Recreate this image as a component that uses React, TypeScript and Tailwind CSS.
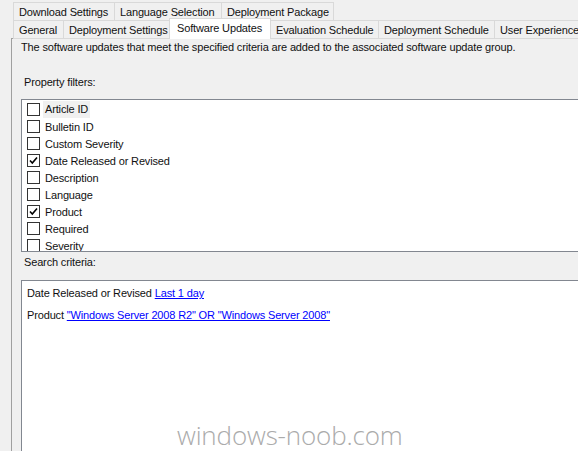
import React from "react";

const topTabs = [
  { label: "Download Settings", w: 101 },
  { label: "Language Selection", w: 107 },
  { label: "Deployment Package", w: 112 },
];

const bottomTabs = [
  { label: "General", w: 50 },
  { label: "Deployment Settings", w: 107 },
  { label: "Software Updates", w: 100, active: true },
  { label: "Evaluation Schedule", w: 108 },
  { label: "Deployment Schedule", w: 116 },
  { label: "User Experience", w: 100 },
];

const filters = [
  { label: "Article ID", checked: false, focus: true },
  { label: "Bulletin ID", checked: false },
  { label: "Custom Severity", checked: false },
  { label: "Date Released or Revised", checked: true },
  { label: "Description", checked: false },
  { label: "Language", checked: false },
  { label: "Product", checked: true },
  { label: "Required", checked: false },
  { label: "Severity", checked: false },
];

function Tab({ label, w, active }: { label: string; w: number; active?: boolean }) {
  if (active) {
    return (
      <div
        className="relative z-10 -mx-px -mt-[2px] h-[21px] shrink-0 overflow-hidden whitespace-nowrap border border-b-0 border-[#d9d9d9] bg-white pl-[7px] pt-[2px]"
        style={{ width: w + 2 }}
      >
        {label}
      </div>
    );
  }
  return (
    <div
      className="-mr-px h-[19px] shrink-0 overflow-hidden whitespace-nowrap border border-[#d9d9d9] bg-[#f0f0f0] pl-[5px] pt-[2px]"
      style={{ width: w + 1 }}
    >
      {label}
    </div>
  );
}

function CheckBox({ checked }: { checked: boolean }) {
  return (
    <div className="flex h-[13px] w-[13px] shrink-0 items-center justify-center border border-[#333333] bg-white">
      {checked && (
        <svg width="9" height="9" viewBox="0 0 9 9">
          <path d="M1 4.5 L3.3 7 L8 1.5" fill="none" stroke="#000" strokeWidth="1.6" />
        </svg>
      )}
    </div>
  );
}

export default function App() {
  return (
    <div
      className="relative h-[451px] w-[578px] overflow-hidden bg-[#f0f0f0] text-[11px] leading-[14px] tracking-[-0.15px] text-[#111111]"
      style={{ fontFamily: '"Liberation Sans", Arial, sans-serif' }}
    >
      {/* Tab strip */}
      <div className="pl-[13px] pt-[2px]">
        <div className="flex h-[18px]">
          {topTabs.map((t) => (
            <Tab key={t.label} label={t.label} w={t.w} />
          ))}
        </div>
        <div className="flex h-[18px]">
          {bottomTabs.map((t) => (
            <Tab key={t.label} label={t.label} w={t.w} active={t.active} />
          ))}
        </div>
      </div>

      {/* Page */}
      <div className="ml-[11px] h-[420px] border-l border-t border-[#a0a0a0] bg-[#f0f0f0] pl-[9px]">
        <p className="whitespace-nowrap pt-[1px]">
          The software updates that meet the specified criteria are added to the associated software update group.
        </p>

        <p className="mt-[21px] pl-[3px]">Property filters:</p>

        <div className="mt-[10px] h-[153px] w-[600px] overflow-hidden border border-[#828790] bg-white pt-[1px]">
          {filters.map((f) => (
            <div key={f.label} className="flex h-[17px] items-center pl-[5px]">
              <CheckBox checked={f.checked} />
              <span
                className={`ml-[3px] px-[2px] ${f.focus ? "bg-[#f0f0f0] leading-[17px]" : "leading-[14px]"}`}
              >
                {f.label}
              </span>
            </div>
          ))}
        </div>

        <p className="mt-[3px] pl-[3px]">Search criteria:</p>

        <div className="mt-[11px] h-[200px] w-[600px] border-l border-t border-[#828790] bg-white pl-[5px] pt-[5px]">
          <p>
            Date Released or Revised{" "}
            <span className="text-[#0000ff] underline">Last 1 day</span>
          </p>
          <p className="mt-[8px]">
            Product{" "}
            <span className="text-[#0000ff] underline">
              "Windows Server 2008 R2" OR "Windows Server 2008"
            </span>
          </p>
        </div>
      </div>

      {/* Watermark */}
      <div
        className="absolute left-[177px] top-[421px] text-[26px] font-light leading-[28px] text-[#ababab]"
        style={{ fontFamily: '"Open Sans", "Noto Sans", sans-serif' }}
      >
        windows-noob.com
      </div>
    </div>
  );
}
